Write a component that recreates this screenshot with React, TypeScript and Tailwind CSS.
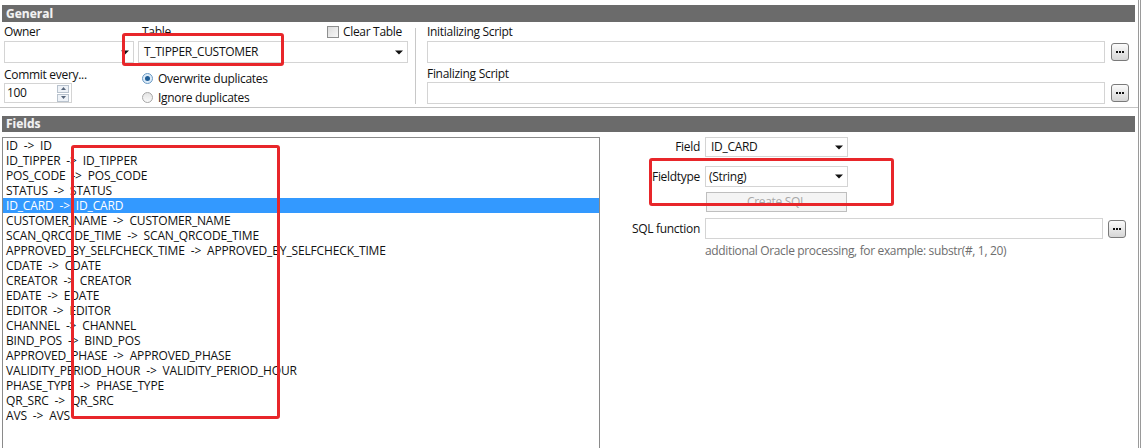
const fields = [
  'ID',
  'ID_TIPPER',
  'POS_CODE',
  'STATUS',
  'ID_CARD',
  'CUSTOMER_NAME',
  'SCAN_QRCODE_TIME',
  'APPROVED_BY_SELFCHECK_TIME',
  'CDATE',
  'CREATOR',
  'EDATE',
  'EDITOR',
  'CHANNEL',
  'BIND_POS',
  'APPROVED_PHASE',
  'VALIDITY_PERIOD_HOUR',
  'PHASE_TYPE',
  'QR_SRC',
  'AVS',
]

function Caret() {
  return (
    <svg width="8" height="5" viewBox="0 0 8 5" className="shrink-0">
      <path d="M0 0.5 H8 L4 4.5 Z" fill="#111" />
    </svg>
  )
}

function Combo({ value, className }: { value?: string; className: string }) {
  return (
    <div className={`flex items-center bg-white border border-[#d4d4d4] pr-[4px] ${className}`}>
      <span className="flex-1 pl-[5px] whitespace-nowrap">{value}</span>
      <Caret />
    </div>
  )
}

function DotsButton() {
  return (
    <div className="w-[18px] h-[18px] rounded-[3px] border border-[#7a7a7a] bg-gradient-to-b from-[#fbfbfb] to-[#d6d6d6] flex items-center justify-center shrink-0">
      <svg width="8" height="2" viewBox="0 0 8 2">
        <rect x="0" y="0" width="2" height="2" fill="#111" />
        <rect x="3" y="0" width="2" height="2" fill="#111" />
        <rect x="6" y="0" width="2" height="2" fill="#111" />
      </svg>
    </div>
  )
}

function Radio({ checked, label }: { checked?: boolean; label: string }) {
  return (
    <div className="h-[19px] flex items-center gap-[5px] pl-[4px]">
      <div
        className={`w-[11px] h-[11px] rounded-full border flex items-center justify-center ${
          checked ? 'border-[#6b9ac4] bg-[#dcebf8]' : 'border-[#a6a6a6] bg-gradient-to-b from-[#e4e4e4] to-[#fafafa]'
        }`}
      >
        {checked && <div className="w-[5px] h-[5px] rounded-full bg-[#1f5d97]" />}
      </div>
      <span>{label}</span>
    </div>
  )
}

function SectionHeader({ title, className }: { title: string; className: string }) {
  return (
    <div
      className={`ml-[2px] mr-[3px] bg-[#6b6b6b] text-[#f2f2f2] font-bold text-[12px] pl-[4px] flex items-center tracking-normal [text-shadow:0_0_1px_#999] ${className}`}
    >
      {title}
    </div>
  )
}

export default function App() {
  return (
    <div className="w-[1144px] h-[448px] overflow-hidden bg-white text-[12px] tracking-[-0.3px] text-[#111] font-['Open_Sans',sans-serif] relative">
      <div className="w-[1141px] h-full border-r border-[#9a9a9a]">
        <div className="w-[1139px] h-full border-r border-[#9a9a9a] pt-[5px]">
          {/* General */}
          <SectionHeader title="General" className="h-[17px]" />
          <div className="flex h-[86px] border-b border-[#c4c4c4]">
            <div className="ml-[4px] w-[130px] flex flex-col">
              <div className="h-[19px] flex items-center">Owner</div>
              <Combo className="h-[22px]" />
              <div className="h-[20px] pt-[4px] leading-[16px] whitespace-nowrap">Commit every...</div>
              <div className="w-[68px] h-[20px] border border-[#d4d4d4] flex items-center pl-[2px] pr-[2px]">
                <span className="flex-1">100</span>
                <div className="flex flex-col gap-px">
                  <div className="w-[12px] h-[8px] border border-[#b9c3ce] bg-[#eef2f7] flex items-center justify-center">
                    <svg width="5" height="3" viewBox="0 0 5 3">
                      <path d="M0 3 L2.5 0 L5 3 Z" fill="#56657a" />
                    </svg>
                  </div>
                  <div className="w-[12px] h-[8px] border border-[#b9c3ce] bg-[#eef2f7] flex items-center justify-center">
                    <svg width="5" height="3" viewBox="0 0 5 3">
                      <path d="M0 0 L2.5 3 L5 0 Z" fill="#56657a" />
                    </svg>
                  </div>
                </div>
              </div>
            </div>

            <div className="ml-[4px] w-[270px] flex flex-col">
              <div className="h-[19px] flex items-center justify-between pl-[4px]">
                <span>Table</span>
                <div className="flex items-center gap-[4px] pr-[6px]">
                  <div className="w-[12px] h-[12px] border border-[#8e8f8f] bg-gradient-to-br from-[#dcdcdc] to-[#f8f8f8]" />
                  <span>Clear Table</span>
                </div>
              </div>
              <Combo value="T_TIPPER_CUSTOMER" className="h-[22px]" />
              <div className="mt-[6px]">
                <Radio checked label="Overwrite duplicates" />
                <Radio label="Ignore duplicates" />
              </div>
            </div>

            <div className="ml-[7px] mt-[6px] mb-[3px] w-px bg-[#c8c8c8]" />

            <div className="ml-[11px] w-[702px] flex flex-col">
              <div className="h-[19px] flex items-center">Initializing Script</div>
              <div className="flex items-center gap-[6px]">
                <div className="w-[678px] h-[22px] border border-[#d4d4d4]" />
                <DotsButton />
              </div>
              <div className="h-[19px] flex items-center pt-[2px]">Finalizing Script</div>
              <div className="flex items-center gap-[6px]">
                <div className="w-[678px] h-[22px] border border-[#d4d4d4]" />
                <DotsButton />
              </div>
            </div>
          </div>

          {/* Fields */}
          <SectionHeader title="Fields" className="h-[16px] mt-[8px]" />
          <div className="flex mt-[5px]">
            <div className="ml-[2px] w-[598px] h-[320px] border border-[#8a8a8a] border-b-0 tracking-[-0.15px]">
              {fields.map((f) => (
                <div
                  key={f}
                  className={`h-[15px] leading-[15px] pl-[3px] whitespace-pre ${
                    f === 'ID_CARD' ? 'bg-[#3399ff] text-white' : ''
                  }`}
                >
                  {`${f}  ->  ${f}`}
                </div>
              ))}
            </div>

            <div className="flex flex-col">
              <div className="flex items-center h-[20px]">
                <span className="w-[100px] text-right">Field</span>
                <Combo value="ID_CARD" className="ml-[5px] w-[143px] h-[20px]" />
              </div>
              <div className="flex items-center h-[21px] mt-[9px]">
                <span className="w-[100px] text-right">Fieldtype</span>
                <Combo value="(String)" className="ml-[5px] w-[143px] h-[21px] [&>span]:pl-[3px]" />
              </div>
              <div className="ml-[106px] mt-[5px] w-[141px] h-[20px] border border-[#bfbfbf] bg-[#f4f4f4] text-[#a8a8a8] flex items-center justify-center">
                Create SQL
              </div>
              <div className="flex items-center h-[21px] mt-[6px]">
                <span className="w-[100px] text-right">SQL function</span>
                <div className="ml-[5px] w-[398px] h-[21px] border border-[#d4d4d4]" />
                <div className="ml-[5px]">
                  <DotsButton />
                </div>
              </div>
              <div className="ml-[105px] mt-[3px] text-[#6e6e6e] tracking-[-0.35px]">
                additional Oracle processing, for example: substr(#, 1, 20)
              </div>
            </div>
          </div>
        </div>
      </div>

      {/* red annotation marks */}
      <div className="absolute left-[122px] top-[33px] w-[162px] h-[33px] border-[3px] border-[#e8262a] rounded-[3px]" />
      <div className="absolute left-[71px] top-[145px] w-[209px] h-[274px] border-[3px] border-[#e8262a] rounded-[3px]" />
      <div className="absolute left-[649px] top-[158px] w-[245px] h-[48px] border-[3px] border-[#e8262a] rounded-[3px]" />
    </div>
  )
}
